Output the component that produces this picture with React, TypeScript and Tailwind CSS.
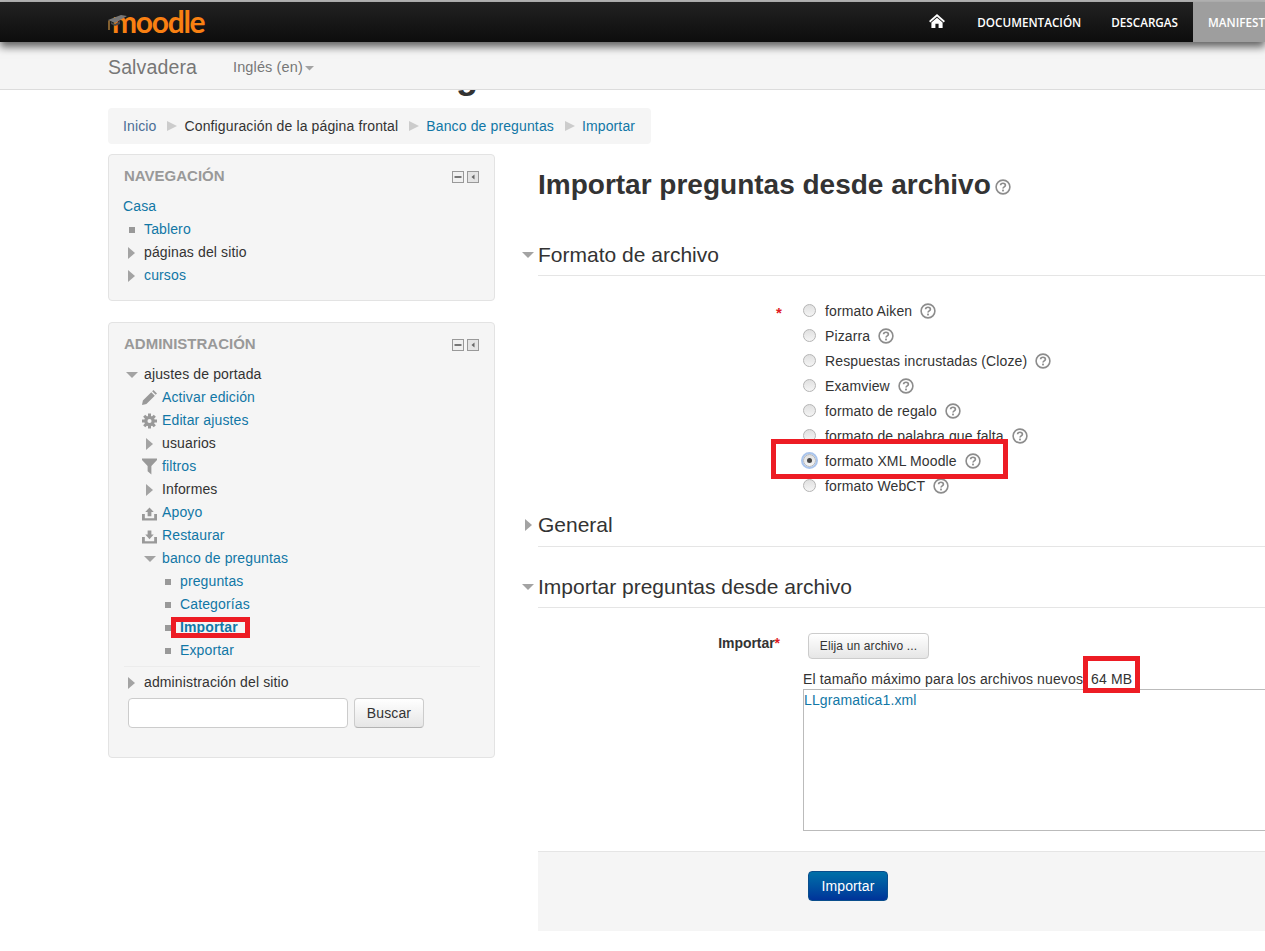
import React from "react";

const Sq = () => <span className="w-[6px] h-[6px] bg-[#999] block" />;
const Tr = () => (
  <svg width="7" height="12" viewBox="0 0 7 12" className="block"><path d="M0 0 L7 6 L0 12 Z" fill="#a3a3a3" /></svg>
);
const Dn = ({ w = 12 }: { w?: number }) => (
  <svg width={w} height={w / 2} viewBox="0 0 12 6" className="block"><path d="M0 0 H12 L6 6 Z" fill="#a3a3a3" /></svg>
);
const Crumb = () => (
  <svg width="10" height="10" viewBox="0 0 10 10" className="block ml-[11px] mr-[7px]"><path d="M0 0 L10 5 L0 10 Z" fill="#cccccc" /></svg>
);
const Help = ({ s = 16 }: { s?: number }) => (
  <svg width={s} height={s} viewBox="0 0 16 16" className="block shrink-0">
    <circle cx="8" cy="8" r="6.9" fill="#fff" stroke="#8c8c8c" strokeWidth="1.6" />
    <path d="M5.6 6.3 C5.7 3.6 10.4 3.6 10.4 6.2 C10.4 7.9 8 7.8 8 9.6" fill="none" stroke="#8c8c8c" strokeWidth="1.7" />
    <rect x="7.1" y="10.6" width="1.8" height="1.8" fill="#8c8c8c" />
  </svg>
);
const BlockIcons = () => (
  <div className="flex gap-[3px]">
    <svg width="12" height="12" viewBox="0 0 12 12"><rect x=".5" y=".5" width="11" height="11" fill="#f0f0f0" stroke="#999" /><rect x="2.5" y="5" width="7" height="2" fill="#777" /></svg>
    <svg width="12" height="12" viewBox="0 0 12 12"><rect x=".5" y=".5" width="11" height="11" fill="#e4e4e4" stroke="#999" /><path d="M7.5 3.5 L4.5 6 L7.5 8.5 Z" fill="#666" /></svg>
  </div>
);
const Pencil = () => (
  <svg width="17" height="17" viewBox="0 0 17 17"><path d="M0 17 L1 12 L10.5 2.5 L14.5 6.5 L5 16 Z M11.5 1.5 L13 0 L17 4 L15.5 5.5 Z" fill="#999" /></svg>
);
const Gear = () => (
  <svg width="16" height="16" viewBox="0 0 16 16">
    <g fill="#999">
      <circle cx="8" cy="8" r="5.6" />
      {[0, 45, 90, 135, 180, 225, 270, 315].map((a) => (
        <rect key={a} x="6.4" y="0" width="3.2" height="3.6" transform={`rotate(${a} 8 8)`} />
      ))}
    </g>
    <circle cx="8" cy="8" r="2.2" fill="#f5f5f5" />
  </svg>
);
const Funnel = () => (
  <svg width="16" height="17" viewBox="0 0 16 17"><path d="M0 0 H16 V1.5 L10 8 V17 L6 13.5 V8 L0 1.5 Z" fill="#999" /></svg>
);
const Tray = ({ up }: { up?: boolean }) => (
  <svg width="16" height="16" viewBox="0 0 16 16">
    <path d="M0 9 H3 V13.5 H13 V9 H16 V16 H0 Z" fill="#999" />
    {up ? <path d="M8 2 L12.5 7 H10 V11.5 H6 V7 H3.5 Z" fill="#999" /> : <path d="M6 2 H10 V6.5 H12.5 L8 11.5 L3.5 6.5 H6 Z" fill="#999" />}
  </svg>
);
const A = ({ children, className = "" }: { children: React.ReactNode; className?: string }) => (
  <span className={`text-[#1177a6] ${className}`}>{children}</span>
);
const Row = ({ icon, indent = 0, children }: { icon: React.ReactNode; indent?: number; children: React.ReactNode }) => (
  <div className="flex items-center h-[23px]" style={{ paddingLeft: indent }}>
    <div className="w-[20px] flex justify-center shrink-0 pr-[5px]">{icon}</div>
    {children}
  </div>
);
const Radio = ({ checked }: { checked?: boolean }) => (
  <span className={`block w-[13px] h-[13px] rounded-full border border-[#b5b5b5] bg-gradient-to-b from-[#e0e0e0] to-[#f5f5f5] relative ${checked ? "outline outline-2 outline-[#a9c4ec]" : ""}`}>
    {checked && <span className="absolute left-[3px] top-[3px] w-[5px] h-[5px] rounded-full bg-[#444]" />}
  </span>
);
const Opt = ({ label, checked, star }: { label: string; checked?: boolean; star?: boolean }) => (
  <div className="flex items-center h-[25px] relative">
    {star && <span className="absolute left-[238px] top-[3px] text-[15px] font-bold text-[#e01b24]">*</span>}
    <div className="ml-[265px] w-[22px] shrink-0 -mt-[2px]"><Radio checked={checked} /></div>
    <span>{label}</span>
    <span className="ml-[8px] -mt-[1px]"><Help /></span>
  </div>
);
const RedBox = ({ className }: { className: string }) => (
  <div className={`absolute border-[5px] border-[#ed1c24] ${className}`} />
);
const SectionHead = ({ title, open, className = "" }: { title: string; open?: boolean; className?: string }) => (
  <div className={`relative border-b border-[#e5e5e5] text-[21px] leading-[30px] tracking-normal text-[#333] ${className}`}>
    <span className={`absolute ${open ? "left-[-16px] top-[12px]" : "left-[-13px] top-[9px]"}`}>{open ? <Dn /> : <Tr />}</span>
    {title}
  </div>
);

export default function App() {
  return (
    <div className="relative w-[1265px] h-[951px] overflow-hidden bg-white text-[14px] tracking-[0.13px] text-[#333] font-['Liberation_Sans',Arial,sans-serif]">
      <div className="h-[2px] bg-[#b5b5b5]" />
      <header className="relative z-20 h-[40px] bg-gradient-to-b from-[#222222] to-[#0d0d0d] shadow-[0_5px_8px_rgba(0,0,0,0.6)] flex">
        <div className="relative ml-[108px] w-[100px] h-[40px]">
          <span className="absolute left-[4px] top-[-1px] text-[30px] leading-[40px] tracking-[-1.3px] font-bold text-[#f98012] font-['Lato',sans-serif]">moodle</span>
          <svg width="20" height="18" viewBox="0 0 20 18" className="absolute left-0 top-[12px]">
            <path d="M0 6 L13 1 L19 2 L7 9 Z" fill="#777" />
            <path d="M3 8 L7 10 L12 7 V10 L7 12 L3 10 Z" fill="#4a4a4a" />
            <path d="M1 6.5 V16" stroke="#a87a3a" strokeWidth="1.5" />
          </svg>
        </div>
        <nav className="ml-auto flex items-center text-[11.7px] tracking-normal text-white font-['Open_Sans',sans-serif] font-semibold h-full">
          <svg width="16" height="14" viewBox="0 0 17 15" className="mr-[32px] -mt-[2px]">
            <path d="M8.5 0 L17 7.5 L15.8 9 L8.5 2.6 L1.2 9 L0 7.5 Z M8.5 4 L14.5 9.2 V15 H10.2 V10.5 H6.8 V15 H2.5 V9.2 Z" fill="#fff" />
          </svg>
          <span className="mr-[30px] pt-[1px]">DOCUMENTACIÓN</span>
          <span className="mr-[15px] pt-[1px]">DESCARGAS</span>
          <div className="w-[72px] h-full bg-[#9e9e9e] flex items-center pl-[15px] pt-[1px] overflow-hidden whitespace-nowrap">MANIFEST</div>
        </nav>
      </header>
      <div className="relative z-10 h-[48px] bg-[#f5f5f5] border-b border-[#dcdcdc] flex items-center pl-[108px] pt-[5px] text-[#777]">
        <span className="text-[19.5px]">Salvadera</span>
        <span className="ml-[36px] text-[14.5px] flex items-center">Inglés (en)<span className="ml-[2px] mt-[1px]"><Dn w={9} /></span></span>
      </div>
      <div className="h-[18px] overflow-hidden relative">
        <span className="absolute left-[456px] top-[-34px] text-[36px] leading-[40px] font-bold text-[#333]">g</span>
      </div>
      <div className="ml-[108px] w-[543px] h-[36px] bg-[#f5f5f5] rounded-[4px] flex items-center px-[15px] whitespace-nowrap">
        <span className="text-[#4a6d95]">Inicio</span>
        <Crumb />
        <span>Configuración de la página frontal</span>
        <Crumb />
        <A>Banco de preguntas</A>
        <Crumb />
        <A>Importar</A>
      </div>
      <div className="flex mt-[10px] pl-[108px]">
        <aside className="w-[387px] shrink-0">
          <section className="h-[147px] bg-[#f5f5f5] border border-[#e3e3e3] rounded-[4px] px-[15px] pt-[10px]">
            <div className="flex justify-between items-start h-[30px]">
              <h2 className="mt-[1px] font-bold text-[#999] text-[15px] tracking-normal leading-[20px]">NAVEGACIÓN</h2>
              <div className="mt-[6px]"><BlockIcons /></div>
            </div>
            <div className="h-[23px] leading-[23px] -ml-[1px]"><A>Casa</A></div>
            <Row icon={<Sq />}><A>Tablero</A></Row>
            <Row icon={<Tr />}>páginas del sitio</Row>
            <Row icon={<Tr />}><A>cursos</A></Row>
          </section>
          <section className="mt-[21px] h-[436px] bg-[#f5f5f5] border border-[#e3e3e3] rounded-[4px] px-[15px] pt-[10px]">
            <div className="flex justify-between items-start h-[30px]">
              <h2 className="mt-[1px] font-bold text-[#999] text-[15px] tracking-normal leading-[20px]">ADMINISTRACIÓN</h2>
              <div className="mt-[6px]"><BlockIcons /></div>
            </div>
            <Row icon={<Dn />}>ajustes de portada</Row>
            <Row indent={18} icon={<Pencil />}><A>Activar edición</A></Row>
            <Row indent={18} icon={<Gear />}><A>Editar ajustes</A></Row>
            <Row indent={18} icon={<Tr />}>usuarios</Row>
            <Row indent={18} icon={<Funnel />}><A>filtros</A></Row>
            <Row indent={18} icon={<Tr />}>Informes</Row>
            <Row indent={18} icon={<Tray up />}><A>Apoyo</A></Row>
            <Row indent={18} icon={<Tray />}><A>Restaurar</A></Row>
            <Row indent={18} icon={<Dn />}><A>banco de preguntas</A></Row>
            <Row indent={36} icon={<Sq />}><A>preguntas</A></Row>
            <Row indent={36} icon={<Sq />}><A>Categorías</A></Row>
            <Row indent={36} icon={<Sq />}><A className="font-bold">Importar</A></Row>
            <Row indent={36} icon={<Sq />}><A>Exportar</A></Row>
            <div className="border-t border-[#ececec] mt-[4px] pt-[4px] -mr-[1px]">
              <Row icon={<Tr />}>administración del sitio</Row>
            </div>
            <div className="flex mt-[4px] ml-[4px] gap-[6px]">
              <div className="w-[220px] h-[30px] bg-white border border-[#ccc] rounded-[4px]" />
              <button className="w-[70px] h-[30px] rounded-[4px] border border-[#ccc] border-b-[#b3b3b3] bg-gradient-to-b from-white to-[#e6e6e6] text-[14px] text-[#333]">Buscar</button>
            </div>
          </section>
        </aside>
        <main className="ml-[43px] flex-1 min-w-0">
          <h1 className="flex items-center h-[40px] mt-[11px] text-[28px] tracking-normal font-bold text-[#333] leading-[40px]">
            Importar preguntas desde archivo<span className="ml-[4px] mt-[4px]"><Help /></span>
          </h1>
          <SectionHead title="Formato de archivo" open className="mt-[35px] h-[36px]" />
          <div className="mt-[23px]">
            <Opt star label="formato Aiken" />
            <Opt label="Pizarra" />
            <Opt label="Respuestas incrustadas (Cloze)" />
            <Opt label="Examview" />
            <Opt label="formato de regalo" />
            <Opt label="formato de palabra que falta" />
            <Opt checked label="formato XML Moodle" />
            <Opt label="formato WebCT" />
          </div>
          <SectionHead title="General" className="mt-[11px] h-[37px]" />
          <SectionHead title="Importar preguntas desde archivo" open className="mt-[25px] h-[36px]" />
          <div className="flex mt-[25px] h-[36px]">
            <div className="w-[242px] text-right font-bold tracking-[-0.05px]">Importar<span className="text-[#e01b24] font-bold">*</span></div>
            <button className="ml-[28px] w-[121px] h-[26px] rounded-[4px] border border-[#ccc] bg-gradient-to-b from-white to-[#e6e6e6] text-[12px] text-[#333]">Elija un archivo ...</button>
          </div>
          <div className="ml-[265px] h-[22px] leading-[22px] -mt-[1px] tracking-[0.13px] whitespace-nowrap">El tamaño máximo para los archivos nuevos: 64 MB</div>
          <div className="ml-[265px] w-[600px] h-[142px] border border-[#bbb] -mt-[1px]"><A>LLgramatica1.xml</A></div>
          <div className="mt-[20px] h-[80px] bg-[#f5f5f5] border-t border-[#e5e5e5] pl-[270px] pt-[19px]">
            <button className="w-[80px] h-[30px] rounded-[4px] bg-gradient-to-b from-[#0070a8] to-[#003399] border border-[#0a4e8c] text-white text-[14px]">Importar</button>
          </div>
        </main>
      </div>
      <RedBox className="left-[171px] top-[617px] w-[79px] h-[21px]" />
      <RedBox className="left-[771px] top-[439px] w-[237px] h-[40px]" />
      <RedBox className="left-[1083px] top-[656px] w-[57px] h-[37px]" />
    </div>
  );
}
